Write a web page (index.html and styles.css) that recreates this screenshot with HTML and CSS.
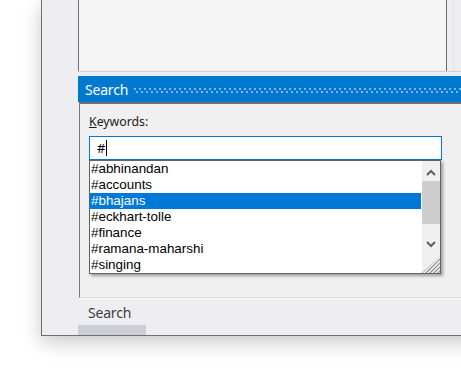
FILE: index.html
```html
<!DOCTYPE html>
<html lang="en">
<head>
    <meta charset="UTF-8">
    <title>Search</title>
    <link rel="stylesheet" href="styles.css">
</head>
<body>
    <div class="window">
        <div class="top">
            <div class="top-pane"></div>
            <div class="top-side"></div>
        </div>

        <div class="titlebar">
            <span class="title">Search</span>
            <span class="dots"></span>
        </div>

        <div class="search-panel">
            <label class="label"><u>K</u>eywords:</label>
            <div class="input">#<span class="caret"></span></div>

            <div class="dropdown">
                <ul class="items">
                    <li>#abhinandan</li>
                    <li>#accounts</li>
                    <li class="selected">#bhajans</li>
                    <li>#eckhart-tolle</li>
                    <li>#finance</li>
                    <li>#ramana-maharshi</li>
                    <li>#singing</li>
                </ul>
                <div class="scrollbar">
                    <svg class="arrow" width="18" height="20" viewBox="0 0 18 20">
                        <path d="M5 14 L9 10 L13 14" fill="none" stroke="#606060" stroke-width="2"/>
                    </svg>
                    <div class="thumb"></div>
                    <div class="track"></div>
                    <svg class="arrow" width="18" height="20" viewBox="0 0 18 20">
                        <path d="M5 6 L9 10 L13 6" fill="none" stroke="#606060" stroke-width="2"/>
                    </svg>
                    <svg class="grip" width="18" height="17" viewBox="0 0 18 17">
                        <defs>
                            <clipPath id="tri"><path d="M18 0 L18 17 L0 17 Z"/></clipPath>
                        </defs>
                        <g clip-path="url(#tri)" stroke="#8c8c8c" stroke-width="1.2">
                            <path d="M-4 21 L18 -1 M0 21 L22 -1 M4 21 L26 -1 M8 21 L30 -1 M12 21 L34 -1 M-8 21 L14 -1"/>
                        </g>
                    </svg>
                </div>
            </div>
        </div>

        <div class="tabs">
            <span class="tab">Search</span>
            <span class="tab-bar"></span>
        </div>
    </div>
</body>
</html>
```

FILE: styles.css
```css
body {
    margin: 0;
    height: 380px;
    overflow: hidden;
    background: #fff;
    font-family: "Noto Sans", "Open Sans", sans-serif;
}

.window {
    margin-left: 41px;
    width: 440px;
    height: 336px;
    box-sizing: border-box;
    padding-left: 36px;
    background: #eeeef2;
    border-left: 1px solid #6e6e6e;
    border-bottom: 1px solid #6e6e6e;
    box-shadow: 0 6px 18px rgba(0,0,0,0.22);
    display: flex;
    flex-direction: column;
}

.top {
    height: 72px;
    display: flex;
    border-bottom: 1px solid #d1ceda;
    box-sizing: border-box;
}
.top-pane {
    width: 369px;
    box-sizing: border-box;
    background: #f5f5f5;
    border-left: 1px solid #737373;
    border-right: 1px solid #6a6a6a;
}
.top-side {
    width: 6px;
    border-right: 1px solid #e2e0ea;
}

.titlebar {
    margin-top: 4px;
    height: 26px;
    background: #0078d0;
    color: #fff;
    display: flex;
    align-items: center;
    padding-left: 7px;
}
.title {
    font-size: 14px;
    letter-spacing: -0.2px;
}
.dots {
    flex: 1;
    height: 5px;
    margin-left: 6px;
    margin-top: 2px;
    background-image:
        radial-gradient(circle at 1px 1px, #7cb8ec 0.9px, transparent 1px),
        radial-gradient(circle at 1px 1px, #7cb8ec 0.9px, transparent 1px);
    background-size: 5px 5px, 5px 5px;
    background-position: 0 0, 2px 3px;
    background-repeat: repeat-x;
}

.search-panel {
    height: 196px;
    box-sizing: border-box;
    margin-left: 1px;
    padding: 10px 0 0 9px;
    background: #f0f0f0;
    border-top: 2px solid #6f6f6f;
    border-left: 1px solid #777;
    border-bottom: 1px solid #d9d9d9;
    box-shadow: 0 1px 0 #fafafa;
}
.label {
    display: block;
    font-size: 12.3px;
    line-height: 16px;
    color: #1a1a1a;
    margin-bottom: 6px;
}
.input {
    width: 353px;
    height: 24px;
    box-sizing: border-box;
    border: 1px solid #0078d7;
    background: #fff;
    padding-left: 7px;
    font-size: 13px;
    line-height: 22px;
    color: #000;
    display: flex;
    align-items: center;
}
.caret {
    width: 1px;
    height: 16px;
    margin-left: 1px;
    background: #000;
}

.dropdown {
    width: 352px;
    height: 114px;
    box-sizing: border-box;
    border: 1px solid #646464;
    background: #fff;
    display: flex;
    box-shadow: 2px 2px 3px rgba(0,0,0,0.35);
}
.items {
    list-style: none;
    margin: 0;
    padding: 0;
    flex: 1;
    font-family: "Liberation Sans", Arial, sans-serif;
    font-size: 13.4px;
    color: #000;
}
.items li {
    height: 16px;
    line-height: 16px;
    padding-left: 1px;
    margin-right: 1px;
}
.items li.selected {
    background: #0078d7;
    color: #fff;
}

.scrollbar {
    width: 18px;
    background: #f0f0f0;
    display: flex;
    flex-direction: column;
}
.arrow { display: block; }
.thumb {
    height: 43px;
    background: #cdcdcd;
}
.track { flex: 1; }
.grip { display: block; }

.tabs {
    flex: 1;
    margin-top: 1px;
    display: flex;
    flex-direction: column;
}
.tab {
    padding: 4px 0 0 10px;
    font-size: 14px;
    line-height: 19px;
    color: #3c3c3c;
    letter-spacing: -0.2px;
}
.tab-bar {
    margin-top: auto;
    width: 68px;
    height: 10px;
    background: #cbcdd9;
}
```
